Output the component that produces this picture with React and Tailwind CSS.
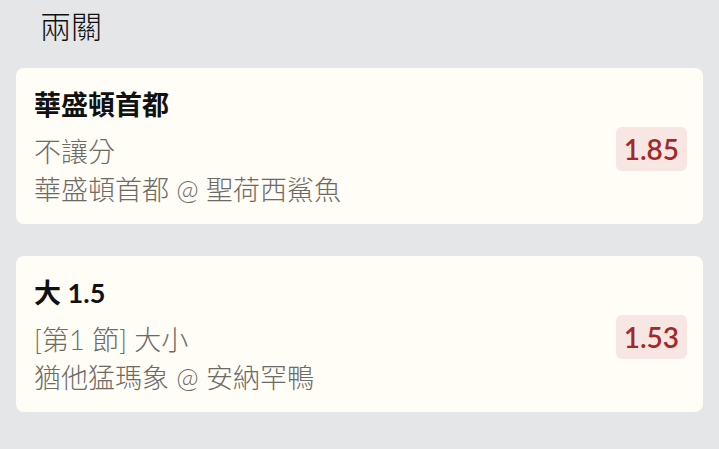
const legs = [
  { id: 1, pick: '華盛頓首都', market: '不讓分', match: '華盛頓首都 @ 聖荷西鯊魚', odds: '1.85' },
  { id: 2, pick: '大 1.5', market: '[第1 節] 大小', match: '猶他猛瑪象 @ 安納罕鴨', odds: '1.53' },
]

const LegCard = ({ leg }) => (
  <div className="flex items-center justify-between rounded-lg bg-[#fffdf6] pl-[18px] pr-4 pt-[21px] pb-[15px]">
    <div className="flex flex-col">
      <p className="text-[27px] font-bold leading-[32px] text-[#111]">{leg.pick}</p>
      <p className="mt-[12px] text-[27px] font-light leading-[38px] text-[#6e6a66]">{leg.market}</p>
      <p className="text-[27px] font-light leading-[38px] text-[#6e6a66]">{leg.match}</p>
    </div>
    <div className="rounded-md bg-[#f7e6e1] px-[8px] py-[6px] text-[28px] font-semibold leading-[32px] text-[#a3282a]">
      {leg.odds}
    </div>
  </div>
)

export default function App() {
  return (
    <div
      className="min-h-[449px] bg-[#e5e6e8] px-4 pt-[6px]"
      style={{ fontFamily: 'Lato, "Noto Sans CJK TC", sans-serif' }}
    >
      <h2 className="pl-[24px] text-[31px] font-light leading-[40px] text-[#111]">兩關</h2>
      <div className="mt-[22px] flex flex-col gap-[32px]">
        {legs.map((leg) => (
          <LegCard key={leg.id} leg={leg} />
        ))}
      </div>
    </div>
  )
}
